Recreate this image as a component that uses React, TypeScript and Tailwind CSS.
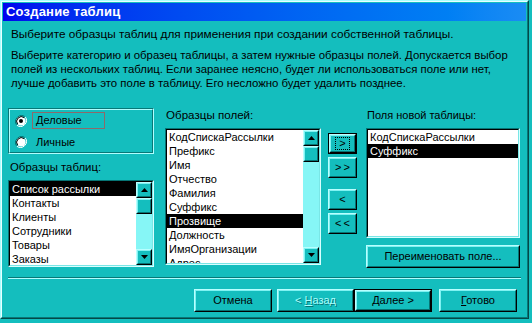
import React from "react";

const FONT = { fontFamily: '"Liberation Sans", Arial, sans-serif' };

function Arrow({ dir }: { dir: "up" | "down" }) {
  return (
    <svg width="7" height="4" viewBox="0 0 7 4" className="block">
      {dir === "up" ? (
        <polygon points="3.5,0 7,4 0,4" fill="#000" />
      ) : (
        <polygon points="0,0 7,0 3.5,4" fill="#000" />
      )}
    </svg>
  );
}

function Raised({ className = "", children }: { className?: string; children?: React.ReactNode }) {
  return (
    <div className={`border border-t-[#b8ffff] border-l-[#b8ffff] border-r-black border-b-black ${className}`}>
      <div className="w-full h-full border border-t-[#7ff2f2] border-l-[#7ff2f2] border-r-[#067474] border-b-[#067474] flex items-center justify-center">
        {children}
      </div>
    </div>
  );
}

function ScrollBar() {
  return (
    <div className="w-[16px] h-full flex flex-col bg-[#86f6f6]">
      <Raised className="w-[16px] h-[16px] bg-[#14bebe]">
        <Arrow dir="up" />
      </Raised>
      <Raised className="w-[16px] h-[16px] bg-[#14bebe]" />
      <div className="flex-1" />
      <Raised className="w-[16px] h-[16px] bg-[#14bebe]">
        <Arrow dir="down" />
      </Raised>
    </div>
  );
}

function ListBox({
  items,
  selected,
  scroll,
  className = "",
}: {
  items: string[];
  selected: number;
  scroll?: boolean;
  className?: string;
}) {
  return (
    <div className={`border border-t-[#067474] border-l-[#067474] border-r-[#d8ffff] border-b-[#d8ffff] ${className}`}>
      <div className="w-full h-full border border-t-black border-l-black border-r-[#7ae6e6] border-b-[#7ae6e6] bg-white flex">
        <div className="flex-1 overflow-hidden">
          {items.map((it, i) => (
            <div
              key={i}
              className={`h-[14px] leading-[14px] pl-[2px] whitespace-nowrap ${
                i === selected ? "bg-black text-white" : "text-black"
              }`}
            >
              {it}
            </div>
          ))}
        </div>
        {scroll && <ScrollBar />}
      </div>
    </div>
  );
}

function Radio({ checked }: { checked?: boolean }) {
  return (
    <svg width="12" height="12" viewBox="0 0 12 12" className="block">
      <path d="M10.2 1.8 A6 6 0 0 0 1.8 10.2" fill="none" stroke="#067474" strokeWidth="1" />
      <path d="M1.8 10.2 A6 6 0 0 0 10.2 1.8" fill="none" stroke="#ffffff" strokeWidth="1" />
      <circle cx="6" cy="6" r="4.6" fill="#ffffff" />
      <path d="M9.3 2.7 A4.7 4.7 0 0 0 2.7 9.3" fill="none" stroke="#000" strokeWidth="1" />
      {checked && <circle cx="6" cy="6" r="2" fill="#000" />}
    </svg>
  );
}

function Btn({
  children,
  className = "",
  isDefault,
}: {
  children?: React.ReactNode;
  className?: string;
  isDefault?: boolean;
}) {
  if (isDefault) {
    return (
      <div className={`border border-black ${className}`}>
        <Raised className="w-full h-full bg-[#14bebe]">{children}</Raised>
      </div>
    );
  }
  return <Raised className={`bg-[#14bebe] ${className}`}>{children}</Raised>;
}

export default function App() {
  const tables = ["Список рассылки", "Контакты", "Клиенты", "Сотрудники", "Товары", "Заказы"];
  const fields = [
    "КодСпискаРассылки",
    "Префикс",
    "Имя",
    "Отчество",
    "Фамилия",
    "Суффикс",
    "Прозвище",
    "Должность",
    "ИмяОрганизации",
    "Адрес",
  ];
  const newFields = ["КодСпискаРассылки", "Суффикс"];

  return (
    <div className="w-[532px] h-[323px] bg-[#14bebe] text-[11px] text-black overflow-hidden" style={FONT}>
      <div className="w-[529px] h-[319px] border border-t-[#a8ffff] border-l-[#a8ffff] border-r-[#034848] border-b-[#034848]">
        <div className="w-full h-full border border-t-[#e8ffff] border-l-[#e8ffff] border-r-[#087878] border-b-[#087878] p-px flex flex-col">
          {/* title bar */}
          <div className="h-[18px] bg-linear-to-r from-[#0000ee] to-[#1a8cf4] flex items-center pl-[3px] text-white font-bold text-[13px] tracking-[0.2px]">
            Создание таблиц
          </div>

          {/* intro text */}
          <div className="pl-[8px] mt-[6px] leading-[14px] h-[14px] whitespace-nowrap text-[11.8px]">
            Выберите образцы таблиц для применения при создании собственной таблицы.
          </div>
          <div className="pl-[8px] mt-[7px] leading-[14px] whitespace-nowrap text-[11.4px]">
            <div>Выберите категорию и образец таблицы, а затем нужные образцы полей. Допускается выбор</div>
            <div>полей из нескольких таблиц. Если заранее неясно, будет ли использоваться поле или нет,</div>
            <div>лучше добавить это поле в таблицу. Его несложно будет удалить позднее.</div>
          </div>

          {/* main area */}
          <div className="mt-[18px] pl-[5px] flex">
            {/* left column */}
            <div className="w-[146px] flex flex-col">
              <div className="h-[46px] border border-t-[#087878] border-l-[#087878] border-r-[#b0ffff] border-b-[#b0ffff]">
                <div className="w-full h-full border border-t-[#b0ffff] border-l-[#b0ffff] border-r-[#087878] border-b-[#087878] flex flex-col pl-[5px]">
                  <div className="flex items-center mt-[2px] h-[17px]">
                    <Radio checked />
                    <div className="ml-[5px] h-[17px] w-[73px] border border-[#8c6a6a] leading-[15px] pl-[3px]">Деловые</div>
                  </div>
                  <div className="flex items-center mt-[6px] h-[14px]">
                    <Radio />
                    <div className="ml-[9px] leading-[14px]">Личные</div>
                  </div>
                </div>
              </div>
              <div className="mt-[6px] h-[14px] leading-[14px] pl-[2px] text-[11.4px]">Образцы таблиц:</div>
              <ListBox items={tables} selected={0} scroll className="mt-[6px] h-[87px] w-[146px]" />
            </div>

            {/* middle column */}
            <div className="ml-[11px] w-[156px] flex flex-col">
              <div className="h-[14px] leading-[14px] pl-px text-[11.6px]">Образцы полей:</div>
              <ListBox items={fields} selected={6} scroll className="mt-[6px] h-[137px] w-[156px]" />
            </div>

            {/* arrow buttons */}
            <div className="ml-[7px] w-[29px] flex flex-col pt-[25px]">
              <Btn isDefault className="h-[21px] w-[29px]">
                <span className="border border-dotted border-black px-[3px] leading-[11px] text-[11px]">&gt;</span>
              </Btn>
              <Btn className="mt-[3px] h-[21px] w-[29px]">
                <span className="leading-[11px] tracking-[2px] pl-[2px]">&gt;&gt;</span>
              </Btn>
              <Btn className="mt-[11px] h-[21px] w-[29px]">
                <span className="leading-[11px]">&lt;</span>
              </Btn>
              <Btn className="mt-[3px] h-[21px] w-[29px]">
                <span className="leading-[11px] tracking-[2px] pl-[2px]">&lt;&lt;</span>
              </Btn>
            </div>

            {/* right column */}
            <div className="ml-[9px] w-[154px] flex flex-col">
              <div className="h-[14px] leading-[14px] pl-px">Поля новой таблицы:</div>
              <ListBox items={newFields} selected={1} className="mt-[6px] h-[110px] w-[154px]" />
              <Btn className="mt-[7px] h-[23px] w-[154px]">Переименовать поле...</Btn>
            </div>
          </div>

          {/* separator */}
          <div className="mt-[9px] mx-[5px] h-[2px] border-t border-t-[#087878] border-b border-b-[#b0ffff]" />

          {/* bottom buttons */}
          <div className="mt-[10px] flex pl-[191px]">
            <Btn className="h-[23px] w-[78px]">Отмена</Btn>
            <Btn className="ml-[5px] h-[23px] w-[77px]">
              <span className="text-[#a8ffff] [text-shadow:1px_1px_0_#067474]">
                &lt; <span className="underline">Н</span>азад
              </span>
            </Btn>
            <Btn isDefault className="h-[23px] w-[78px]">
              <span>
                <span className="underline">Д</span>алее &gt;
              </span>
            </Btn>
            <Btn className="ml-[7px] h-[23px] w-[78px]">
              <span>
                <span className="underline">Г</span>отово
              </span>
            </Btn>
          </div>
        </div>
      </div>
    </div>
  );
}
